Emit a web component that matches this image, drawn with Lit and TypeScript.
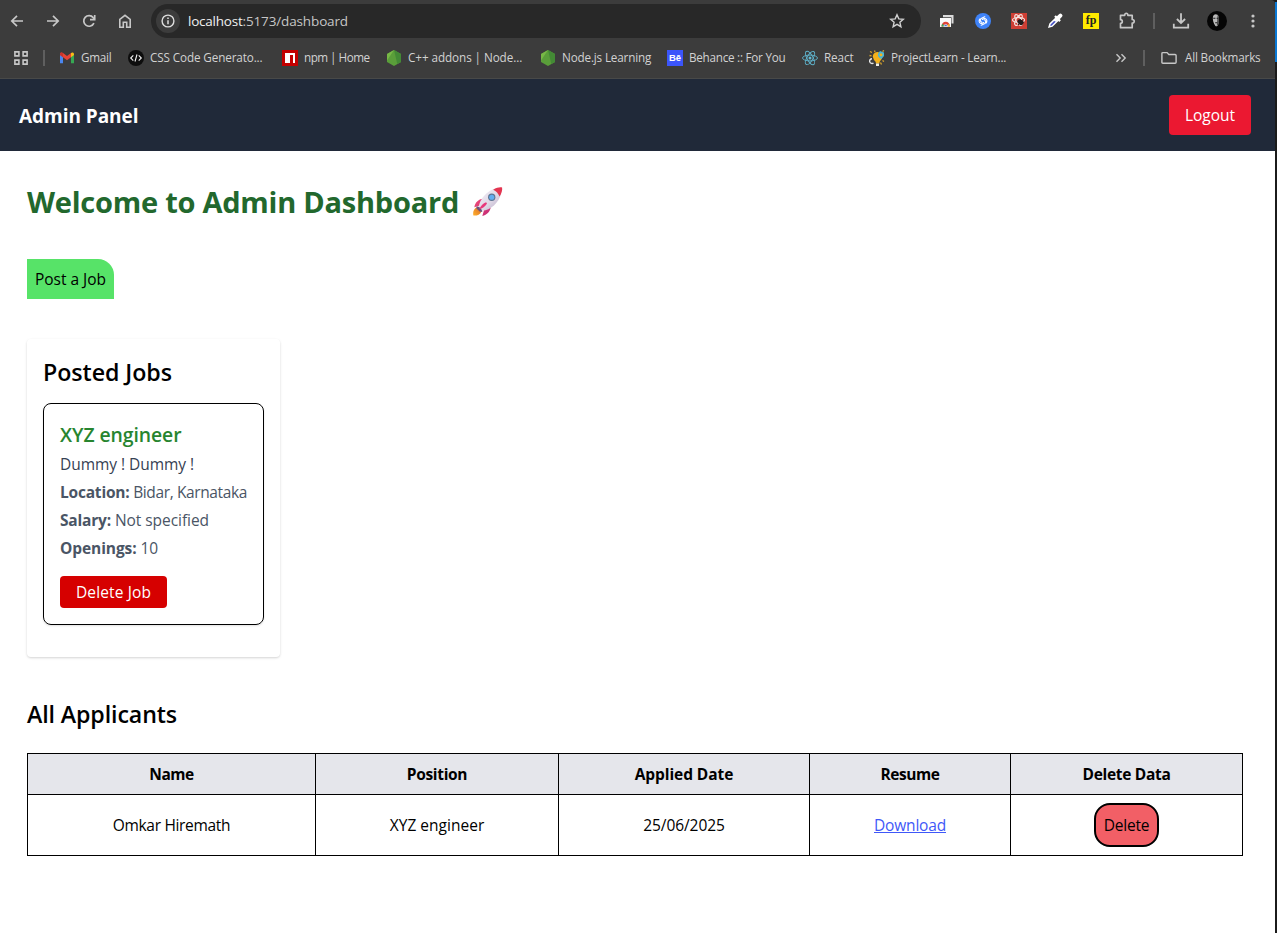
import { LitElement, html, svg, css } from "lit";
import { customElement, property } from "lit/decorators.js";
import { styleMap } from "lit/directives/style-map.js";

/** Single-line text whose tracking is adjusted so that it fills a given advance width. */
@customElement("fit-text")
class FitText extends LitElement {
  static styles = css`
    :host { display: inline-block; white-space: pre; }
    span { text-decoration: inherit; }
  `;
  @property({ type: Number }) w = 0;
  @property() text = "";
  render() {
    return html`<span>${this.text}</span>`;
  }
  firstUpdated() {
    const span = this.renderRoot.querySelector("span") as HTMLElement;
    const natural = span.getBoundingClientRect().width;
    span.style.letterSpacing = `${(this.w - natural) / this.text.length}px`;
  }
}

const fit = (text: string, w: number) => html`<fit-text .text=${text} .w=${w}></fit-text>`;

const icon = (size: number, body: unknown) =>
  html`<svg width=${size} height=${size} viewBox="0 0 ${size} ${size}" fill="none">${body}</svg>`;

const icons = {
  back: icon(16, svg`<path d="M14 8H3M8 2.8 2.8 8 8 13.2" stroke="#c7c7c7" stroke-width="1.7"/>`),
  forward: icon(16, svg`<path d="M2 8h11M8 2.8 13.2 8 8 13.2" stroke="#c7c7c7" stroke-width="1.7"/>`),
  reload: icon(16, svg`<path d="M12.9 10.1A5.3 5.3 0 1 1 12.2 4.6L13.6 6" stroke="#c7c7c7" stroke-width="1.7"/><path d="M13.7 2v4.7H9" stroke="#c7c7c7" stroke-width="1.7"/>`),
  home: icon(16, svg`<path d="M2.8 14.2V6.3L8 2.3l5.2 4v7.9H9.7V9.3H6.3v4.9z" stroke="#c7c7c7" stroke-width="1.6"/>`),
  info: icon(14, svg`<circle cx="7" cy="7" r="5.9" stroke="#dedede" stroke-width="1.4"/><path d="M7 6.2v4M7 3.6v1.5" stroke="#dedede" stroke-width="1.5"/>`),
  star: icon(16, svg`<path d="M8 1.8l1.8 4.1 4.5.4-3.4 3 1 4.4L8 11.4l-3.9 2.3 1-4.4-3.4-3 4.5-.4z" stroke="#d0d0d0" stroke-width="1.4"/>`),
  shots: icon(16, svg`<path d="M4 2h10.500v8.500H12.500V4.300H4z" fill="#dcdcdc"/><path d="M1 5h11v9H1z" fill="#fafafa"/><path d="M2.500 13.500a4.200 4.800 0 0 1 8.400 0z" fill="#df4438"/><path d="M2.500 13.500a4.400 4.400 0 0 1 .9-2.800L6 13.500z" fill="#35a853"/><path d="M10.900 13.500a4.400 4.400 0 0 0-.9-2.800l-2.500 2.800z" fill="#f5bd26"/><path d="M4.800 13.500a1.900 2.100 0 0 1 3.800 0z" fill="#3f79d8" stroke="#fff" stroke-width=".6"/>`),
  shazam: icon(16, svg`<circle cx="8" cy="8" r="8" fill="#3f83f8"/><path d="M9.800 3.700 6.600 5.300C4.600 6.400 5 8.500 6.700 9.200M6.200 12.300l3.200-1.600c2-1.100 1.600-3.200-.1-3.900M5 5.800C3.600 7.200 3.900 9.500 5.500 10.300 6.600 10.800 7.800 10.200 8.600 9.500M11 10.200c1.400-1.400 1.100-3.700-.5-4.500C9.400 5.200 8.200 5.800 7.400 6.500" stroke="#fff" stroke-width="1.100" stroke-linecap="round"/>`),
  bug: icon(16, svg`<rect width="16" height="16" fill="#ce3f34"/><g stroke="#f6e4e2" stroke-width="1.200"><ellipse cx="7.500" cy="7" rx="6" ry="2.500"/><ellipse cx="7.500" cy="7" rx="6" ry="2.500" transform="rotate(60 7.500 7)"/><ellipse cx="7.500" cy="7" rx="6" ry="2.500" transform="rotate(120 7.500 7)"/></g><ellipse cx="9.500" cy="9.200" rx="2.300" ry="3.200" fill="#241b1b" transform="rotate(-45 9.500 9.200)"/><path d="M6.500 9l3.500 3M9 6.500l4 3M7 12l5-5.500" stroke="#241b1b"/>`),
  dropper: icon(16, svg`<path d="M2.100 14 3 11l6.500-6.500 2.200 2.200L5.100 13.200z" fill="#4450c4" stroke="#fff" stroke-width="1.500"/><path d="M8 3l5.100 5.100" stroke="#fff" stroke-width="2.200"/><path d="M10.500 5.500 13.400 2.600" stroke="#fff" stroke-width="4" stroke-linecap="round"/><path d="M6.500 7.800 9.200 5l1.700 1.700-2 2z" fill="#fff"/>`),
  puzzle: icon(20, svg`<path d="M3.500 4.300h4.200c-.1-2.700 3.300-2.700 3.200 0h4.300v4.200c2.700-.1 2.700 3.700 0 3.600v4.600H3.500v-4.400c2.400 0 2.400-3.600 0-3.600z" stroke="#c7c7c7" stroke-width="1.700" stroke-linejoin="round"/>`),
  download: icon(18, svg`<path d="M9 1.300v9.500M4.900 7 9 11l4.100-4M1.800 11.800v3.800h14.400v-3.800" stroke="#c7c7c7" stroke-width="1.800"/>`),
  avatar: icon(20, svg`<circle cx="10" cy="10" r="10" fill="#050505"/><path d="M6 5.500C6.800 3 9 2.800 10.500 3.800c1.400 1 1.300 3 1 4.400l.4 2.200-.9 3.500c-.8 1.800-2 1.900-2.900.5C6.500 12 5.300 8.500 6 5.500z" fill="#b9b9b9"/><path d="M10.600 4c1.800 1.500 1.500 3.500 1.200 5l.3 2-1 3-1.300 1z" fill="#4c4c4c"/><path d="M6.200 7.300h2.200M9.600 7.300h1.600M8.200 11.800h2" stroke="#1c1c1c" stroke-width="1.100"/>`),
  menu: icon(16, svg`<g fill="#c7c7c7"><circle cx="8" cy="3" r="1.600"/><circle cx="8" cy="8" r="1.600"/><circle cx="8" cy="13" r="1.600"/></g>`),
  apps: icon(14, svg`<g stroke="#c7c7c7" stroke-width="1.600"><path d="M.9.9h4v4h-4zM9.100.9h4v4h-4zM.9 9.100h4v4h-4zM9.100 9.100h4v4h-4z"/></g>`),
  more: icon(12, svg`<path d="M1.500 2.200 5.200 6 1.500 9.800M6.500 2.200 10.200 6 6.500 9.800" stroke="#c7c7c7" stroke-width="1.400"/>`),
  folder: icon(16, svg`<path d="M.9 3.600q0-1 1-1h4.200l1.700 1.900h6.300q1 0 1 1v6.800q0 1-1 1H1.900q-1 0-1-1z" stroke="#c7c7c7" stroke-width="1.400"/>`),
};

const hexagon = icon(16, svg`<path d="M8 0 15 4v8l-7 4-7-4V4z" fill="#5a9e3a"/><path d="M8 0 15 4v8l-3.700 2.100z" fill="#438a35"/><path d="M8 0 1 4v6.500z" fill="#77b846"/>`);

const favicons = {
  gmail: icon(16, svg`<path d="M1 4v9.300h3V6.600z" fill="#4a86f0"/><path d="M15 4v9.300h-3V6.600z" fill="#36a853"/><path d="M1 4.200C1 2.500 2.700 2 4 3l4 3 4-3v4.200l-4 3-7-5.200z" fill="#e64335"/><path d="M12 3c1.300-1 3-.5 3 1.200V5l-3 2.200z" fill="#f8ba18"/><path d="M1 4v1l3 2.200V3C2.700 2 1 2.500 1 4z" fill="#c8352c"/>`),
  code: icon(16, svg`<circle cx="8" cy="8" r="8" fill="#0d0d0d"/><path d="M5.300 5.400 2.700 8l2.600 2.600M10.700 5.400 13.300 8l-2.600 2.600M9 4.500 7 11.500" stroke="#f2f2f2" stroke-width="1.100"/>`),
  npm: icon(16, svg`<rect width="16" height="16" fill="#c20000"/><path d="M3 3h10v10h-2V5H8v8H3z" fill="#fff"/>`),
  node: hexagon,
  behance: html`<span class="be">Bē</span>`,
  react: icon(16, svg`<g stroke="#5fb3cc" stroke-width=".9"><ellipse cx="8" cy="8" rx="7.500" ry="2.900"/><ellipse cx="8" cy="8" rx="7.500" ry="2.900" transform="rotate(60 8 8)"/><ellipse cx="8" cy="8" rx="7.500" ry="2.900" transform="rotate(120 8 8)"/></g><circle cx="8" cy="8" r="1.500" fill="#62bad4"/>`),
  bulb: icon(16, svg`<path d="M3.700 6.500a4.800 4.800 0 1 1 8 3.800L10.500 12v1.500H6.800V12L5 10z" fill="#f4b21b"/><path d="M7 13.500h3V16H7z" fill="#f0eee4"/><path d="M9 3.500 11 1l4 1.500V6l-2.500 3-2-1L9 6z" fill="#4ab5d4"/><circle cx="12" cy="4.800" r="1.500" fill="#f4b21b"/><path d="M4.500 13A2.400 2.400 0 1 1 3 8.700" stroke="#e6e6e6" stroke-width="1.400"/><path d="M1 1.500l2 1M5.500.5l.5 1.500M.5 5.500l2 .4M13.500 10.500l1.500 1M11.500 12.500l1 2M15 .5l-1.500 1" stroke="#dca62b" stroke-width="1.300"/>`),
};

const rocket = html`<svg class="rocket" width="33" height="32" viewBox="0 0 34 34">
  <defs>
    <linearGradient id="hull" x1="0" y1="0" x2="1" y2="1"><stop offset="0" stop-color="#f5f0f8"/><stop offset=".55" stop-color="#dfd8e6"/><stop offset="1" stop-color="#b7a9c4"/></linearGradient>
    <linearGradient id="fin" x1="0" y1="0" x2="1" y2="1"><stop offset="0" stop-color="#f04a78"/><stop offset="1" stop-color="#c32a75"/></linearGradient>
    <linearGradient id="flame" x1="1" y1="0" x2="0" y2="1"><stop offset="0" stop-color="#d96a2d"/><stop offset="1" stop-color="#ffb02a"/></linearGradient>
  </defs>
  <path d="M5.500 22.500C2 24.500 1.300 28 2 31.300c3.500.4 7-.7 8.500-4.300z" fill="url(#flame)"/>
  <path d="M12.500 13.500C7 14 4 17.500 3 22.500l6-1.800zM20.500 22c-.5 5-4 8.500-9 10l2-7z" fill="url(#fin)"/>
  <path d="M8 25.500C6 19 14 5.500 26 2.500l5.500 5.500C29 19 16.500 29 8 25.500z" fill="url(#hull)"/>
  <path d="M23 4C27 1.500 30 1 32.500 1.500 33 4 32 8 29.800 11.200 28.500 8 26.500 5.500 23 4z" fill="#e33550"/>
  <circle cx="21.500" cy="12" r="3.900" fill="#5d7592"/><circle cx="21.500" cy="12" r="2.700" fill="#62aef0"/>
  <path d="M5.500 21.500c2.500 0 5.500 3 6 6l-2.800-.4-3.400-3.300z" fill="#69527c"/>
  <path d="M15.500 17.300c-3 1.200-5.500 3.700-7.300 7.200 3.500-.7 6.500-3 8.300-6z" fill="#e8397b"/>
</svg>`;

const bookmarks = [
  { icon: favicons.gmail, text: "Gmail", w: 30.5, span: 69 },
  { icon: favicons.code, text: "CSS Code Generato...", w: 112.5, span: 154 },
  { icon: favicons.npm, text: "npm | Home", w: 65.5, span: 104 },
  { icon: favicons.node, text: "C++ addons | Node...", w: 114.2, span: 154 },
  { icon: favicons.node, text: "Node.js Learning", w: 89.2, span: 127 },
  { icon: favicons.behance, text: "Behance :: For You", w: 96.4, span: 135 },
  { icon: favicons.react, text: "React", w: 29.500, span: 67 },
  { icon: favicons.bulb, text: "ProjectLearn - Learn...", w: 115.2, span: 243 },
];

@customElement("browser-chrome")
class BrowserChrome extends LitElement {
  static styles = css`
    :host { display: block; height: 79px; box-sizing: border-box; background: #3c3c3c; color: #d2d2d2; border-bottom: 1px solid #484948; overflow: hidden; border-top-right-radius: 4px; }
    svg { display: block; flex: none; }
    .toolbar { display: flex; align-items: center; height: 42px; margin-left: -1px; }
    .cell { width: 36px; display: flex; justify-content: center; flex: none; }
    .omni { width: 770px; height: 34px; box-sizing: border-box; margin: 0 8px; padding: 0 16px 0 5px; border-radius: 17px; background: #282828; display: flex; align-items: center; flex: none; }
    .site { width: 24px; height: 24px; border-radius: 50%; background: #3c3c3c; display: grid; place-items: center; margin-right: 8px; }
    .url { flex: 1; font-size: 13.5px; color: #c6c6c6; display: flex; }
    .host { color: #f0f0f0; }
    .fp { width: 16px; height: 16px; background: #ffe900; color: #222; font: bold 12px/14px "Liberation Serif", serif; text-align: center; }
    .sep { width: 2px; height: 16px; background: #5f5f5f; flex: none; }
    .tool-sep { margin: 0 8px; }
    .bar { display: flex; align-items: center; height: 32px; padding-left: 14px; font-size: 11.7px; }
    .bar fit-text { margin-bottom: 2px; }
    .first-sep { margin: 0 14px 0 15px; }
    .item { display: flex; align-items: center; gap: 6px; flex: none; }
    .more { margin-left: 3px; }
    .last-sep { margin: 0 16px; }
    .all { display: flex; align-items: center; gap: 8px; }
    .be { width: 16px; height: 16px; background: #3b55fb; color: #fff; font: bold 9.5px/16px "Liberation Sans", sans-serif; text-align: center; }
  `;
  render() {
    const cell = (i: unknown) => html`<div class="cell">${i}</div>`;
    return html`
      <div class="toolbar">
        ${[icons.back, icons.forward, icons.reload, icons.home].map(cell)}
        <div class="omni">
          <div class="site">${icons.info}</div>
          <div class="url"><span class="host">${fit("localhost", 54.5)}</span>${fit(":5173/dashboard", 105.5)}</div>
          ${icons.star}
        </div>
        ${[icons.shots, icons.shazam, icons.bug, icons.dropper, html`<span class="fp">fp</span>`, icons.puzzle].map(cell)}
        <div class="sep tool-sep"></div>
        ${[icons.download, icons.avatar, icons.menu].map(cell)}
      </div>
      <div class="bar">
        ${icons.apps}
        <div class="sep first-sep"></div>
        ${bookmarks.map((b) => html`<div class="item" style=${styleMap({ width: `${b.span}px` })}>${b.icon}${fit(b.text, b.w)}</div>`)}
        <div class="more">${icons.more}</div>
        <div class="sep last-sep"></div>
        <div class="all">${icons.folder}${fit("All Bookmarks", 75.5)}</div>
      </div>
    `;
  }
}

const columns = [
  { title: "Name", w: 44.5, span: 288 },
  { title: "Position", w: 60.5, span: 243 },
  { title: "Applied Date", w: 98.5, span: 251 },
  { title: "Resume", w: 59, span: 201 },
  { title: "Delete Data", w: 88, span: 232 },
];

@customElement("app-root")
class AppRoot extends LitElement {
  static styles = css`
    :host { display: flex; height: 933px; overflow: hidden; background: #1b1b1b; font-family: "Open Sans", "Noto Sans", sans-serif; font-size: 15.5px; line-height: 24px; color: #000; }
    .window { width: 1275px; flex: none; display: flex; flex-direction: column; }
    .edge { width: 2px; height: 60px; margin-top: 2px; background: #0a78d4; }
    .page { flex: 1; background: #fff; }
    h1, h2, h3, p { margin: 0; }
    header { height: 72px; box-sizing: border-box; padding: 0 24px 0 19px; display: flex; align-items: center; justify-content: space-between; background: #202939; color: #fff; }
    header h1 { font-size: 19px; font-weight: 700; padding-top: 2px; }
    button { font: inherit; border: 0; padding: 0; display: block; }
    .logout { width: 82px; height: 40px; border-radius: 4px; background: #eb1831; color: #fff; }
    main { padding: 31px 32px 0 27px; }
    .welcome { display: flex; gap: 12px; align-items: center; height: 40px; font-size: 29px; line-height: 40px; font-weight: 700; color: #22682d; }
    .post { margin-top: 37px; width: 87px; height: 40px; background: #57e368; border-radius: 0 16px 0 0; color: #000; }
    .card { margin-top: 40px; width: 253px; height: 318px; box-sizing: border-box; padding: 17px 16px 16px; border-radius: 4px; box-shadow: 0 1px 3px rgba(0,0,0,.1), 0 1px 2px rgba(0,0,0,.08); }
    h2 { font-size: 23.2px; line-height: 32px; font-weight: 600; }
    .job { margin-top: 15px; box-sizing: border-box; height: 222px; border: 1px solid #000; border-radius: 8px; padding: 17px 16px 16px; color: #4a5565; box-shadow: 0 1px 2px rgba(0,0,0,.12); }
    h3 { font-size: 19.4px; line-height: 28px; font-weight: 600; color: #27852f; }
    .job p { margin-top: 4px; height: 24px; white-space: nowrap; display: flex; }
    .job .desc { margin-top: 3px; color: #364153; }
    b, th { font-weight: 700; }
    .del-job { margin-top: 16px; width: 107px; height: 32px; background: #d60000; border-radius: 4px; color: #fff; }
    .applicants { margin-top: 41px; }
    table { margin-top: 23px; width: 1216px; table-layout: fixed; border-collapse: separate; border-spacing: 0; border: solid #000; border-width: 1px 0 0 1px; }
    th, td { box-sizing: border-box; border: solid #000; border-width: 0 1px 1px 0; padding: 0; text-align: center; vertical-align: middle; }
    th { height: 41px; background: #e5e6eb; }
    td { height: 61px; }
    a { color: #3f58f8; }
    a fit-text { text-decoration: underline; }
    .del { margin: 0 auto; width: 65px; height: 44px; box-sizing: border-box; border: 2px solid #000; border-radius: 16px; background: #f25f66; color: #000; }
    .rocket { display: block; }
  `;
  render() {
    return html`
      <div class="window">
        <browser-chrome></browser-chrome>
        <div class="page">
          <header>
            <h1>${fit("Admin Panel", 119.5)}</h1>
            <button class="logout">${fit("Logout", 50)}</button>
          </header>
          <main>
            <h1 class="welcome">${fit("Welcome to Admin Dashboard", 432)}${rocket}</h1>
            <button class="post">${fit("Post a Job", 71)}</button>
            <section class="card">
              <h2>${fit("Posted Jobs", 129)}</h2>
              <article class="job">
                <h3>${fit("XYZ engineer", 121.5)}</h3>
                <p class="desc">${fit("Dummy ! Dummy !", 134)}</p>
                <p><b>${fit("Location:", 69.5)}</b>${fit(" Bidar, Karnataka", 117.5)}</p>
                <p><b>${fit("Salary:", 51)}</b>${fit(" Not specified", 98)}</p>
                <p><b>${fit("Openings:", 76.5)}</b>${fit(" 10", 21.5)}</p>
                <button class="del-job">${fit("Delete Job", 75)}</button>
              </article>
            </section>
            <h2 class="applicants">${fit("All Applicants", 150)}</h2>
            <table>
              <thead>
                <tr>${columns.map((c) => html`<th style=${styleMap({ width: `${c.span}px` })}>${fit(c.title, c.w)}</th>`)}</tr>
              </thead>
              <tbody>
                <tr>
                  <td>${fit("Omkar Hiremath", 117.5)}</td>
                  <td>${fit("XYZ engineer", 94.5)}</td>
                  <td>${fit("25/06/2025", 81.5)}</td>
                  <td><a>${fit("Download", 72)}</a></td>
                  <td><button class="del">${fit("Delete", 45.5)}</button></td>
                </tr>
              </tbody>
            </table>
          </main>
        </div>
      </div>
      <div class="edge"></div>
    `;
  }
}
